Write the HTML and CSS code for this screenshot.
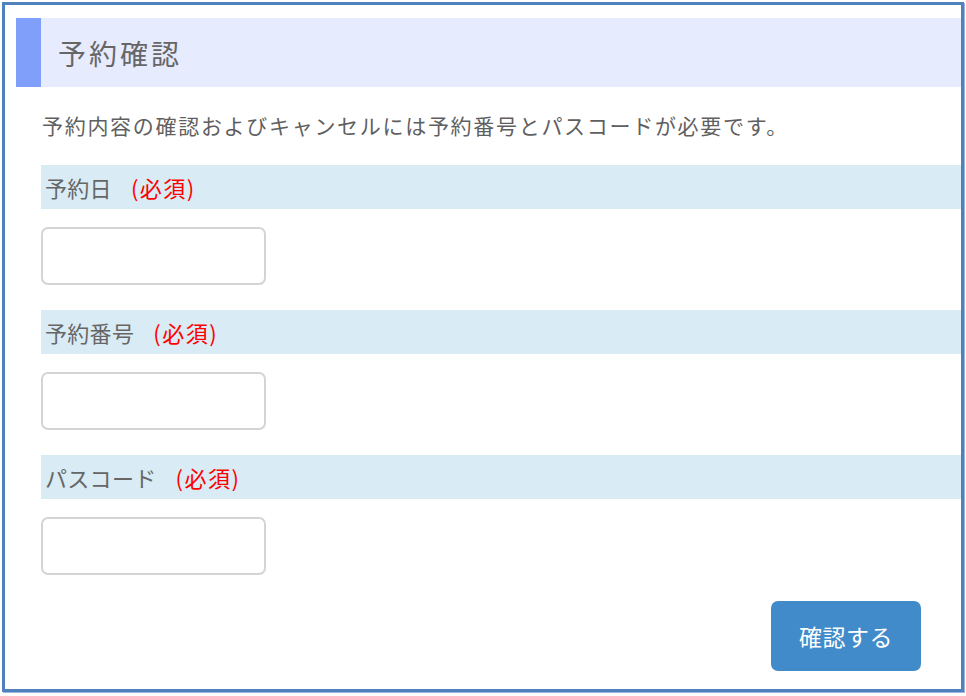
FILE: index.html
```html
<!DOCTYPE html>
<html lang="ja">
<head>
<meta charset="utf-8">
<link rel="stylesheet" href="styles.css">
</head>
<body>
<div class="frame">
  <div class="header">
    <div class="accent"></div>
    <h1 class="title">予約確認</h1>
  </div>
  <div class="content">
    <p class="desc">予約内容の確認およびキャンセルには予約番号とパスコードが必要です。</p>
    <div class="label"><span class="label-text">予約日</span><span class="req">(必須)</span></div>
    <input class="field" type="text">
    <div class="label"><span class="label-text">予約番号</span><span class="req">(必須)</span></div>
    <input class="field" type="text">
    <div class="label"><span class="label-text">パスコード</span><span class="req">(必須)</span></div>
    <input class="field" type="text">
    <div class="actions">
      <button class="btn" type="button">確認する</button>
    </div>
  </div>
</div>
</body>
</html>
```
FILE: styles.css
```css
html, body {
  margin: 0;
  padding: 0;
  background: #ffffff;
}
body {
  font-family: "Noto Sans CJK JP", "Noto Sans", sans-serif;
  color: #666666;
}
.frame {
  box-sizing: border-box;
  margin: 2px;
  width: 962px;
  height: 690px;
  border: 3px solid #4f81bd;
  box-shadow: 1px 1px 0 #9bb5dc;
}
.header {
  display: flex;
  align-items: center;
  height: 69px;
  margin: 13px 0 0 11px;
  background: #e6ebfe;
}
.accent {
  width: 25px;
  align-self: stretch;
  background: #7f9ffa;
}
.title {
  margin: 0 0 0 17px;
  font-size: 28px;
  font-weight: normal;
  color: #666666;
  letter-spacing: 3px;
  line-height: 1;
}
.content {
  padding-left: 36px;
  display: flex;
  flex-direction: column;
  align-items: flex-start;
}
.desc {
  margin: 23px 0 0 1px;
  font-size: 21px;
  line-height: 30px;
  letter-spacing: 1.7px;
  color: #5f5f5f;
}
.label {
  align-self: stretch;
  margin-top: 25px;
  height: 44px;
  line-height: 44px;
  padding-left: 4px;
  background: #d9ebf4;
  font-size: 22px;
}
.label-text {
  letter-spacing: 0.3px;
  margin-right: 19px;
}
.req {
  color: #ff0000;
  letter-spacing: 1.5px;
}
.field {
  box-sizing: border-box;
  margin-top: 18px;
  width: 225px;
  height: 58px;
  border: 2px solid #d4d4d4;
  border-radius: 7px;
  background: #ffffff;
  font: inherit;
}
.field + .label {
  margin-top: 25px;
}
.actions {
  align-self: stretch;
  display: flex;
  justify-content: flex-end;
  margin-top: 26px;
  padding-right: 40px;
}
.btn {
  width: 150px;
  height: 70px;
  border: none;
  border-radius: 7px;
  background: #428bca;
  color: #ffffff;
  font-family: "Noto Sans CJK JP", sans-serif;
  font-size: 23px;
  letter-spacing: 0.5px;
}
```
